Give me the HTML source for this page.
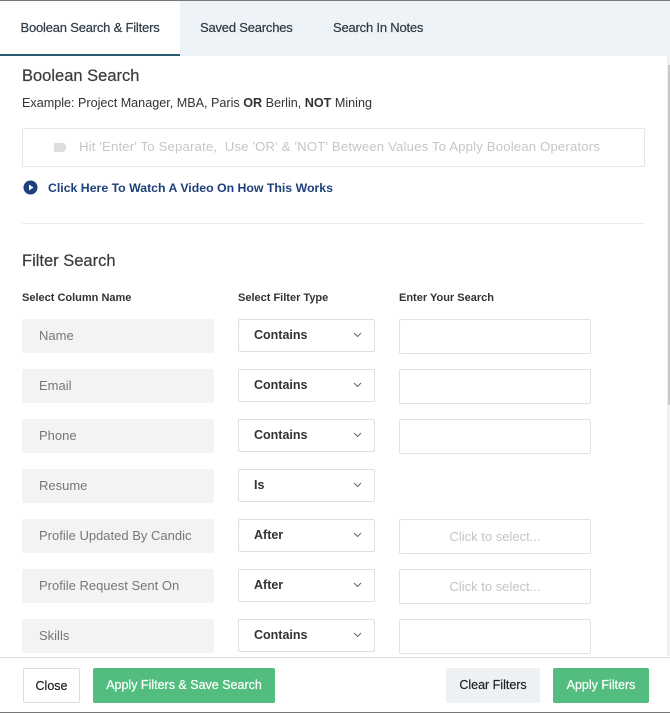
<!DOCTYPE html><html><head><style>
*{box-sizing:border-box;margin:0;padding:0}
body{width:670px;height:713px;overflow:hidden;background:#fff;font-family:"Liberation Sans",Arial,sans-serif;color:#333;position:relative}
.abs{position:absolute}
.tabs{left:0;top:0;width:670px;height:56px;background:#eef3f8;border-top:1px solid #777}
.tab{position:absolute;top:0;height:55px;line-height:54px;font-size:13px;color:#2d3a45;letter-spacing:-0.2px;-webkit-text-stroke:0.2px #2d3a45}
.colbox{position:absolute;left:22px;width:192px;height:34px;background:#f3f3f3;border-radius:2px;font-size:13px;color:#777;padding-left:17px;line-height:34px;white-space:nowrap;overflow:hidden}
.sel{position:absolute;left:238px;width:137px;height:33px;border:1px solid #dcdfe3;border-radius:2px;font-size:12.5px;font-weight:bold;color:#333;padding-left:15px;line-height:30px}
.sel svg{position:absolute;right:12px;top:12px}
.inp{position:absolute;left:399px;width:192px;height:35px;border:1px solid #dfe3e8;border-radius:2px;font-size:13px;color:#c4c4c4;text-align:center;line-height:33px}
.btn{position:absolute;top:668px;height:35px;font-size:12.5px;line-height:34px;text-align:center;border-radius:2px;-webkit-text-stroke:0.2px currentColor}
.g{background:#52bd7e;color:#fff}
</style></head><body>
<div class="abs tabs">
<div class="tab" style="left:0;width:180px;background:#fff;text-align:center;border-bottom:2px solid #2a5a73;height:55px">Boolean Search &amp; Filters</div>
<div class="tab" style="left:200px">Saved Searches</div>
<div class="tab" style="left:333px">Search In Notes</div>
</div>
<div class="abs" style="left:667px;top:56px;width:3px;height:600px;background:#f0f3f5"></div>
<div class="abs" style="left:668px;top:65px;width:2px;height:340px;background:#c8ccc9"></div>
<div class="abs" style="left:22px;top:67px;font-size:16.5px;color:#3a3a3a;-webkit-text-stroke:0.2px #3a3a3a">Boolean Search</div>
<div class="abs" style="left:22px;top:96px;font-size:12.6px;color:#333">Example: Project Manager, MBA, Paris <b>OR</b> Berlin, <b>NOT</b> Mining</div>
<div class="abs" style="left:22px;top:128px;width:623px;height:39px;border:1px solid #e3e6ea;border-radius:2px"></div>
<div class="abs" style="left:54px;top:143px;width:12px;height:9px;background:#ddd;border-radius:1px 4px 4px 1px"></div>
<div class="abs" style="left:79px;top:139px;font-size:13.2px;color:#c6c6c6;letter-spacing:0.15px">Hit 'Enter' To Separate,&nbsp; Use 'OR' &amp; 'NOT' Between Values To Apply Boolean Operators</div>
<svg class="abs" style="left:23px;top:180px" width="15" height="15"><circle cx="7.5" cy="7.5" r="7" fill="#1d3f7a"/><path d="M6 4.5L10.5 7.5L6 10.5Z" fill="#fff"/></svg>
<div class="abs" style="left:48px;top:181px;font-size:12.3px;font-weight:bold;color:#1d3f7a">Click Here To Watch A Video On How This Works</div>
<div class="abs" style="left:22px;top:223px;width:623px;height:1px;background:#ececec"></div>
<div class="abs" style="left:22px;top:252px;font-size:16.5px;color:#3a3a3a;-webkit-text-stroke:0.2px #3a3a3a">Filter Search</div>
<div class="abs" style="left:22px;top:292px;font-size:11px;font-weight:bold;color:#333">Select Column Name</div>
<div class="abs" style="left:238px;top:292px;font-size:11px;font-weight:bold;color:#333">Select Filter Type</div>
<div class="abs" style="left:399px;top:292px;font-size:11px;font-weight:bold;color:#333">Enter Your Search</div>

<div class="colbox" style="top:319px">Name</div><div class="sel" style="top:319px">Contains<svg width="9" height="6"><path d="M1 1L4.5 4.5L8 1" stroke="#666" fill="none"/></svg></div><div class="inp" style="top:319px"></div>
<div class="colbox" style="top:369px">Email</div><div class="sel" style="top:369px">Contains<svg width="9" height="6"><path d="M1 1L4.5 4.5L8 1" stroke="#666" fill="none"/></svg></div><div class="inp" style="top:369px"></div>
<div class="colbox" style="top:419px">Phone</div><div class="sel" style="top:419px">Contains<svg width="9" height="6"><path d="M1 1L4.5 4.5L8 1" stroke="#666" fill="none"/></svg></div><div class="inp" style="top:419px"></div>
<div class="colbox" style="top:469px">Resume</div><div class="sel" style="top:469px">Is<svg width="9" height="6"><path d="M1 1L4.5 4.5L8 1" stroke="#666" fill="none"/></svg></div>
<div class="colbox" style="top:519px">Profile Updated By Candic</div><div class="sel" style="top:519px">After<svg width="9" height="6"><path d="M1 1L4.5 4.5L8 1" stroke="#666" fill="none"/></svg></div><div class="inp" style="top:519px">Click to select...</div>
<div class="colbox" style="top:569px">Profile Request Sent On</div><div class="sel" style="top:569px">After<svg width="9" height="6"><path d="M1 1L4.5 4.5L8 1" stroke="#666" fill="none"/></svg></div><div class="inp" style="top:569px">Click to select...</div>
<div class="colbox" style="top:619px">Skills</div><div class="sel" style="top:619px">Contains<svg width="9" height="6"><path d="M1 1L4.5 4.5L8 1" stroke="#666" fill="none"/></svg></div><div class="inp" style="top:619px"></div>

<div class="abs" style="left:0;top:657px;width:670px;height:56px;background:#fff;border-top:1px solid #ddd;border-bottom:1px solid #777"></div>
<div class="btn" style="left:23px;width:57px;border:1px solid #ddd;color:#222">Close</div>
<div class="btn g" style="left:93px;width:182px">Apply Filters &amp; Save Search</div>
<div class="btn" style="left:446px;width:94px;background:#eef1f4;color:#222">Clear Filters</div>
<div class="btn g" style="left:553px;width:96px">Apply Filters</div>
</body></html>
